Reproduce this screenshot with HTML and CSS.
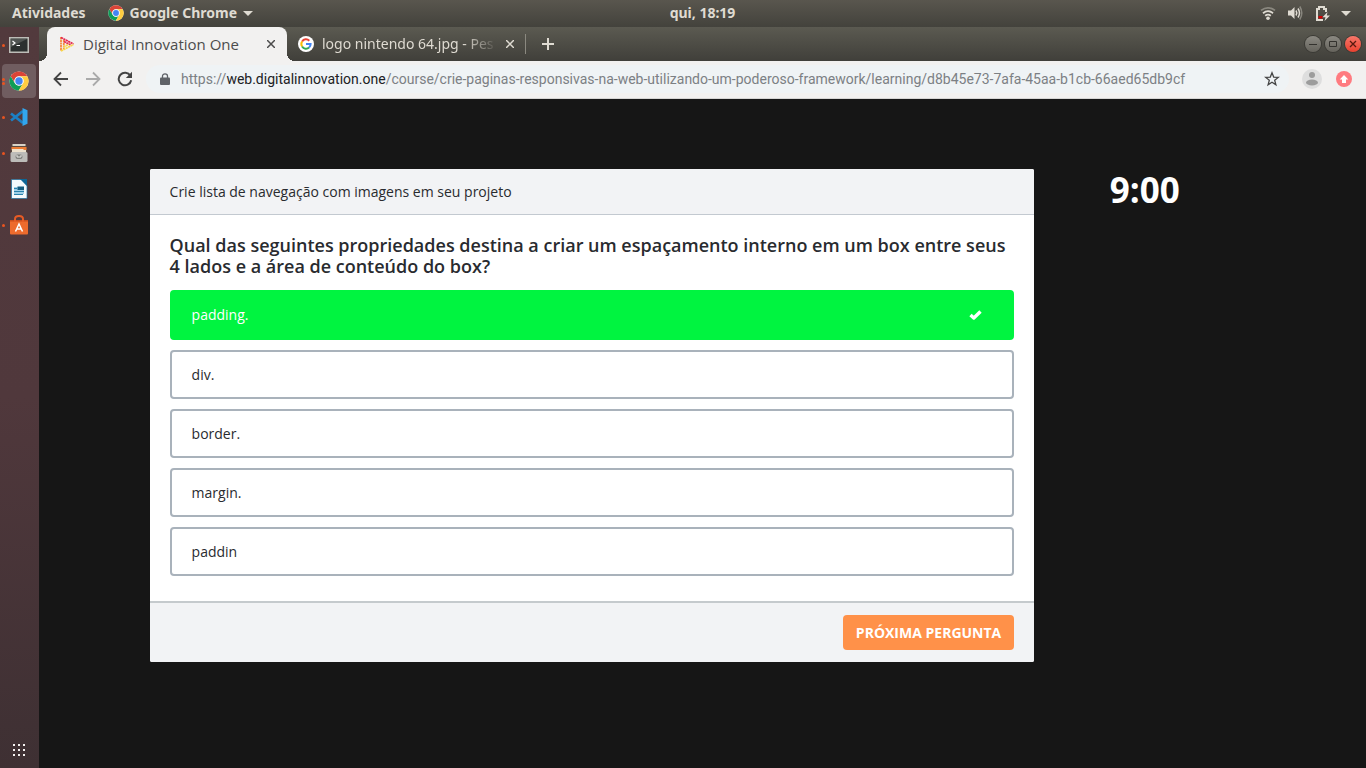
FILE: index.html
```html
<!DOCTYPE html>
<html lang="pt-BR">
<head>
<meta charset="utf-8">
<meta name="viewport" content="width=device-width, initial-scale=1">
<title>Digital Innovation One</title>
<link rel="stylesheet" href="styles.css">
</head>
<body>
<svg class="defs" aria-hidden="true">
  <symbol id="chrome" viewBox="0 0 48 48">
    <circle cx="24" cy="24" r="23" fill="#fff"/>
    <path d="M4 12.5A23 23 0 0 1 44 12.7H24A11.3 11.3 0 0 0 14 29Z" fill="#db4437"/>
    <path d="M4 12.5A23 23 0 0 0 23.5 47L33.8 29.6A11.3 11.3 0 0 1 14 29.6Z" fill="#0f9d58"/>
    <path d="M44 12.7A23 23 0 0 1 23.5 47L33.8 29.6A11.3 11.3 0 0 0 24 12.7Z" fill="#ffcd40"/>
    <circle cx="24" cy="24" r="11" fill="#f1f1f1"/>
    <circle cx="24" cy="24" r="8.8" fill="#4285f4"/>
  </symbol>
</svg>
<div class="desktop">
  <header class="topbar">
    <div class="topbar-left">
      <button class="bar-button" type="button">Atividades</button>
      <button class="bar-button" type="button">
        <svg class="icon-16"><use href="#chrome"/></svg>
        Google Chrome
        <svg class="caret" viewBox="0 0 10 5"><path d="M0 0h10L5 5z" fill="currentColor"/></svg>
      </button>
    </div>
    <button class="bar-button" type="button">qui, 18:19</button>
    <div class="topbar-right">
      <svg class="icon-16" viewBox="0 0 16 16" fill="none" stroke="#dfdbd2" stroke-width="1.8"><path d="M1 5.4Q8 .2 15 5.4" opacity=".4"/><path d="M3 8.2Q8 4 13 8.2M5.2 10.8Q8 8.4 10.8 10.8"/><circle cx="8" cy="13.2" r="1.8" fill="#dfdbd2" stroke="none"/></svg>
      <svg class="icon-16" viewBox="0 0 16 16" fill="none" stroke="#dfdbd2" stroke-width="1.5"><path d="M1 5.5h3L7.5 2v12L4 10.500H1z" fill="#dfdbd2" stroke="none"/><path d="M9 5.500q1.600 2.500 0 5M11 3.500q3 4.500 0 9"/><path d="M12.800 1.500q4 6.500 0 13" opacity=".4"/></svg>
      <svg class="icon-16" viewBox="0 0 16 16"><path d="M9 15H3V4h2V2h5v2h2v3" fill="none" stroke="#dfdbd2" stroke-width="2"/><path d="M4.500 11h4v2.500h-4z" fill="#d40000"/><path d="M13.500 7 8.500 12.200h3l-1 3.800 5.500-5.500h-3.200z" fill="#dfdbd2"/></svg>
      <svg class="caret" viewBox="0 0 10 5"><path d="M0 0h10L5 5z" fill="currentColor"/></svg>
    </div>
  </header>

  <div class="workspace">
    <nav class="dock" aria-label="Aplicativos">
      <button class="dock-item running" type="button" aria-label="Terminal">
        <svg class="icon-20" viewBox="0 0 20 20"><path d="M0 2h20v16H0z" fill="#bdbdb8"/><path d="M1.500 3.500h17v13h-17z" fill="#2c302f"/><path d="M2 4h16L2 12z" fill="#505452"/><path d="m3.500 6 2.500 2-2.500 2M7.500 10.500h3.500" fill="none" stroke="#fff" stroke-width="1.200"/></svg>
      </button>
      <button class="dock-item running double active" type="button" aria-label="Google Chrome">
        <svg class="icon-20"><use href="#chrome"/></svg>
      </button>
      <button class="dock-item running" type="button" aria-label="Visual Studio Code">
        <svg class="icon-20" viewBox="0 0 20 20"><path d="M2 6.500 14 16M2 13.500 14 4" stroke="#1c80c5" stroke-width="2.800" fill="none"/><path d="M13.500 1 18.500 3.200V16.800L13.500 19z" fill="#32a6ee"/></svg>
      </button>
      <button class="dock-item running" type="button" aria-label="Arquivos">
        <svg class="icon-20" viewBox="0 0 20 20"><path d="M3 1h14l1.500 9h-17z" fill="#5b4a40"/><path d="M3.500 1h13v2h-13z" fill="#d8d2c8"/><path d="M2.500 4h15v3h-15z" fill="#ea7c35"/><path d="M3 6h11l1 1h2v3H3z" fill="#eee2ce"/><rect x="1.500" y="9" width="17" height="10" rx="1.500" fill="#bdbcb9"/><rect x="6.500" y="11.500" width="7" height="4.500" rx="2" fill="#80807d"/><path d="M8 12v2h4v-2" fill="none" stroke="#e8e8e5"/></svg>
      </button>
      <button class="dock-item" type="button" aria-label="LibreOffice Writer">
        <svg class="icon-20" viewBox="0 0 20 20"><path d="M2.500.5h10l5.500 6v13H2.500z" fill="#f5fafc" stroke="#1b6f9d" stroke-width=".7"/><path d="M11 0h7v7z" fill="#0d6696"/><path d="M5 8h10v7H5z" fill="#9fd0e6"/><path d="M8.500 7.500H15v3.500H8.500z" fill="#155d80"/><path d="M5 9.500h3M5 12.500h10M5 15.500h9" stroke="#2882ad"/></svg>
      </button>
      <button class="dock-item running" type="button" aria-label="Ubuntu Software">
        <svg class="icon-20" viewBox="0 0 20 20"><path d="M1 5h18v13.500q0 1-1 1H2q-1 0-1-1z" fill="#ed6b2d"/><path d="M1 5h18v1.500H1z" fill="#c94f1d"/><path d="M6 7V4q0-3 4-3t4 3v3" fill="none" stroke="#e75b25" stroke-width="2"/><path d="m6.500 16.500 3.500-7.500 3.500 7.500M8 14h4" fill="none" stroke="#fff" stroke-width="1.500"/></svg>
      </button>
      <button class="dock-item apps" type="button" aria-label="Mostrar aplicativos">
        <svg class="icon-20" viewBox="0 0 20 20" fill="#f4f1f0"><path d="M4 4h2v2H4zm5 0h2v2H9zm5 0h2v2h-2zM4 9h2v2H4zm5 0h2v2H9zm5 0h2v2h-2zM4 14h2v2H4zm5 0h2v2H9zm5 0h2v2h-2z"/></svg>
      </button>
    </nav>

    <div class="browser">
      <div class="tabstrip">
        <div class="tab tab-active">
          <svg class="icon-16" viewBox="0 0 16 16" fill="none" stroke-width="1.800" stroke-dasharray="2.200 .5"><path d="M2 1v14M4.800 4v9" stroke="#f68a3c"/><path d="M2 1.500 14.500 8M5 5.500l6.500 3.300" stroke="#e5264e"/><path d="M2 15 14.500 8.500M4.500 11l5-2.700" stroke="#f8d447"/></svg>
          <button class="tab-title" type="button">Digital Innovation One</button>
          <button class="tab-close" type="button" aria-label="Fechar guia"><svg viewBox="0 0 8 8"><path d="m0 0 8 8M8 0 0 8" stroke="currentColor" stroke-width="1.500"/></svg></button>
        </div>
        <div class="tab">
          <svg class="icon-16" viewBox="0 0 16 16"><circle cx="8" cy="8" r="8" fill="#fff"/><g fill="none" stroke-width="2"><path d="M4.100 5.500A4.600 4.600 0 0 1 11.300 4.700" stroke="#ea4335"/><path d="M4.100 5.500a4.600 4.600 0 0 0 0 5" stroke="#fbbc05"/><path d="M4.100 10.500a4.600 4.600 0 0 0 7 1" stroke="#34a853"/><path d="M8 8h4.600a4.600 4.600 0 0 1-1.500 3.500" stroke="#4285f4"/></g></svg>
          <button class="tab-title tab-title-fade" type="button">logo nintendo 64.jpg - Pes</button>
          <button class="tab-close" type="button" aria-label="Fechar guia"><svg viewBox="0 0 8 8"><path d="m0 0 8 8M8 0 0 8" stroke="currentColor" stroke-width="1.500"/></svg></button>
        </div>
        <button class="new-tab" type="button" aria-label="Nova guia"><svg viewBox="0 0 12 12"><path d="M6 0v12M0 6h12" stroke="currentColor" stroke-width="2"/></svg></button>
        <div class="window-controls">
          <button class="win" type="button" aria-label="Minimizar"><svg viewBox="0 0 16 16"><path d="M4 8.500h8" stroke="currentColor"/></svg></button>
          <button class="win" type="button" aria-label="Maximizar"><svg viewBox="0 0 16 16"><path d="M4.500 5.500h7v5h-7z" fill="none" stroke="currentColor"/></svg></button>
          <button class="win win-close" type="button" aria-label="Fechar"><svg viewBox="0 0 16 16"><path d="m5 5 6 6M11 5l-6 6" stroke="currentColor" stroke-width="1.300"/></svg></button>
        </div>
      </div>

      <div class="toolbar">
        <button class="tool" type="button" aria-label="Voltar"><svg viewBox="0 0 16 16"><path d="M15 8H2M8 1.500 1.500 8 8 14.500" fill="none" stroke="currentColor" stroke-width="1.800"/></svg></button>
        <button class="tool" type="button" aria-label="Avançar" disabled><svg viewBox="0 0 16 16"><path d="M1 8h13M8 1.500 14.500 8 8 14.500" fill="none" stroke="currentColor" stroke-width="1.800"/></svg></button>
        <button class="tool" type="button" aria-label="Recarregar"><svg viewBox="0 0 16 16"><path d="M13.400 4.700A6.300 6.300 0 1 0 14.200 9.300" fill="none" stroke="currentColor" stroke-width="2"/><path d="M15 .8V7H8.800z" fill="currentColor"/></svg></button>
        <div class="omnibox">
          <svg class="lock" viewBox="0 0 10 12"><path d="M1 4.500h8q1 0 1 1V11q0 1-1 1H1q-1 0-1-1V5.500q0-1 1-1z" fill="#5f6368"/><path d="M2.500 5V3a2.500 2.200 0 0 1 5 0v2" fill="none" stroke="#5f6368" stroke-width="1.300"/></svg>
          <div class="url" role="textbox" contenteditable="true" spellcheck="false" aria-label="Barra de endereço">https://<span class="url-host">web.digitalinnovation.one</span>/course/crie-paginas-responsivas-na-web-utilizando-um-poderoso-framework/learning/d8b45e73-7afa-45aa-b1cb-66aed65db9cf</div>
          <button class="tool" type="button" aria-label="Favoritar"><svg viewBox="0 0 16 16"><path d="m8 1.800 1.700 4.300 4.600.3-3.600 2.900 1.200 4.500L8 11.300l-3.900 2.500 1.200-4.500-3.600-2.900 4.600-.3z" fill="none" stroke="currentColor" stroke-width="1.300"/></svg></button>
        </div>
        <button class="profile" type="button" aria-label="Perfil"><svg viewBox="0 0 20 20"><circle cx="10" cy="10" r="10" fill="#dedede"/><circle cx="10" cy="6" r="3" fill="#9c9c9c"/><ellipse cx="10" cy="13.500" rx="6" ry="3" fill="#9c9c9c"/></svg></button>
        <button class="update" type="button" aria-label="Atualizar"><svg viewBox="0 0 16 16"><circle cx="8" cy="8" r="8" fill="#ff7b80"/><path d="m8 4 4.300 4.500H10V12H6V8.500H3.700z" fill="#fff"/></svg></button>
      </div>

      <main class="page">
        <section class="quiz">
          <header class="quiz-header">Crie lista de navegação com imagens em seu projeto</header>
          <div class="quiz-body">
            <h1 class="question">Qual das seguintes propriedades destina a criar um espaçamento interno em um box entre seus 4 lados e a área de conteúdo do box?</h1>
            <div class="options">
              <button class="option option-correct" type="button">padding.<svg class="check" viewBox="0 0 13 10"><path d="m1.500 5 3.300 3L11.500 1.600" fill="none" stroke="#fff" stroke-width="3.400" stroke-linejoin="round"/></svg></button>
              <button class="option" type="button">div.</button>
              <button class="option" type="button">border.</button>
              <button class="option" type="button">margin.</button>
              <button class="option" type="button">paddin</button>
            </div>
          </div>
          <footer class="quiz-footer"><button class="next" type="button">PRÓXIMA PERGUNTA</button></footer>
        </section>
        <aside class="timer">9:00</aside>
      </main>
    </div>
  </div>
</div>
</body>
</html>
```
FILE: styles.css
```css
* { box-sizing: border-box; }
body { margin: 0; font-family: "Open Sans", sans-serif; font-size: 14px; }
button { margin: 0; padding: 0; border: 0; background: none; color: inherit; font: inherit; }
svg { display: block; flex: none; }
.defs { position: absolute; width: 0; height: 0; }
.icon-16 { width: 16px; height: 16px; }
.icon-20 { width: 20px; height: 20px; }
.caret { width: 10px; height: 5px; }

.desktop { display: flex; flex-direction: column; min-height: 100vh; }

.topbar {
  display: grid;
  grid-template-columns: 1fr auto 1fr;
  align-items: center;
  height: 27px;
  padding: 0 12px 1px 51px;
  background: linear-gradient(#59564e, #43423c);
  color: #dfdbd2;
  font-family: "Noto Sans", sans-serif;
  font-weight: 700;
}
.topbar-left { display: flex; gap: 22px; margin-left: -39px; }
.topbar-right { display: flex; align-items: center; justify-content: flex-end; gap: 11px; padding-right: 3px; }
.bar-button { display: flex; align-items: center; gap: 6px; line-height: 20px; }

.workspace { display: flex; flex: 1; }
.dock {
  display: flex;
  flex-direction: column;
  gap: 2px;
  width: 39px;
  padding: 1px 3px 1px 2px;
  background: linear-gradient(#523a3d, #50383c 50%, #3e3033);
}
.dock-item {
  position: relative;
  display: flex;
  align-items: center;
  justify-content: center;
  height: 34px;
  border-radius: 4px;
}
.dock-item.active { background: #705d60; }
.dock-item.running::before {
  content: "";
  position: absolute;
  left: 0;
  width: 3px;
  height: 3px;
  border-radius: 50%;
  background: #e95420;
}
.dock-item.double::before { margin-top: -4px; box-shadow: 0 4px #e95420; }
.dock-item.apps { margin-top: auto; }

.browser { display: flex; flex: 1; flex-direction: column; min-width: 0; }
.tabstrip {
  display: flex;
  align-items: center;
  height: 34px;
  padding: 0 5px 0 8px;
  background: linear-gradient(#5b5a51, #403f3a);
  color: #dfdbd2;
  font-family: "Noto Sans", sans-serif;
}
.tab {
  display: flex;
  align-items: center;
  gap: 8px;
  width: 239px;
  height: 20px;
  padding: 0 11px;
  border-right: 1px solid #8b8980;
}
.tab-active {
  position: relative;
  width: 240px;
  height: 34px;
  padding: 0 12px;
  border: 0;
  border-radius: 8px 8px 0 0;
  background: #f2f1f0;
  color: #4c4c4c;
  font-family: "Open Sans", sans-serif;
  font-size: 15px;
}
.tab-active::before,
.tab-active::after {
  content: "";
  position: absolute;
  bottom: 0;
  width: 8px;
  height: 8px;
}
.tab-active::before { right: 100%; background: radial-gradient(circle at 0 0, transparent 8px, #f2f1f0 8px); }
.tab-active::after { left: 100%; background: radial-gradient(circle at 100% 0, transparent 8px, #f2f1f0 8px); }
.tab-title { flex: 1; padding-bottom: 1px; text-align: left; line-height: 20px; white-space: nowrap; }
.tab-title-fade { mask-image: linear-gradient(to right, #000 80%, transparent); }
.tab-close { flex: none; width: 8px; height: 8px; }
.new-tab { width: 12px; height: 12px; margin-left: 16px; }
.window-controls { display: flex; gap: 4px; margin-left: auto; }
.win {
  width: 16px;
  height: 16px;
  border-radius: 50%;
  background: linear-gradient(#8b8982, #65635c);
  box-shadow: 0 0 0 1px #3b3a35;
  color: #33322e;
}
.win-close { background: linear-gradient(#f7776a, #e9412f); color: #57190f; }

.toolbar {
  display: flex;
  align-items: center;
  gap: 16px;
  height: 38px;
  padding: 0 14px 1px;
  border-bottom: 1px solid #d6d5d4;
  background: #f2f1f0;
  color: #444;
}
.tool { width: 16px; height: 16px; }
.tool:disabled { color: #aaa; }
.omnibox {
  display: flex;
  flex: 1;
  align-items: center;
  gap: 11px;
  min-width: 0;
  height: 28px;
  margin-left: -3px;
  padding: 0 9px 0 14px;
  border-radius: 14px;
  background: #eff3f5;
}
.lock { width: 10px; height: 12px; }
.url { flex: 1; overflow: hidden; color: #7c8084; font-family: Roboto, sans-serif; line-height: 20px; white-space: nowrap; }
.url-host { color: #202124; }
.profile { width: 20px; height: 20px; margin-left: -3px; }
.update { width: 16px; height: 16px; margin-left: -2px; }

.page {
  display: grid;
  flex: 1;
  grid-template-columns: 4fr 1fr;
  align-items: start;
  padding: 70px 8.333%;
  background: #161616;
}
.quiz { overflow: hidden; border-radius: 2px; background: #fff; color: #292b2f; }
.quiz-header {
  padding: 12px 20px;
  border-bottom: 1px solid #c3c9d0;
  background: #f2f3f5;
  line-height: 21px;
}
.quiz-body { padding: 20px 20px 25px; }
.question { margin: 0 0 13px; font-size: 18px; font-weight: 600; line-height: 21px; }
.options { display: flex; flex-direction: column; gap: 10px; }
.option {
  display: flex;
  align-items: center;
  justify-content: space-between;
  min-height: 49px;
  padding: 0 20px;
  border: 2px solid #a9b2bb;
  border-radius: 4px;
  text-align: left;
}
.option-correct { min-height: 50px; padding: 0 30px 1px 20px; border-color: #00f440; background: #00f440; color: #fff; }
.check { width: 13px; height: 10px; }
.quiz-footer {
  display: flex;
  justify-content: flex-end;
  padding: 12px 20px;
  border-top: 2px solid #c5cacd;
  background: #f2f3f5;
}
.next {
  height: 35px;
  padding: 0 13px;
  border-radius: 4px;
  background: #ff9149;
  color: #fff;
  font-weight: 700;
}
.timer { color: #fff; font-size: 35px; font-weight: 700; line-height: 42px; text-align: center; }
```
